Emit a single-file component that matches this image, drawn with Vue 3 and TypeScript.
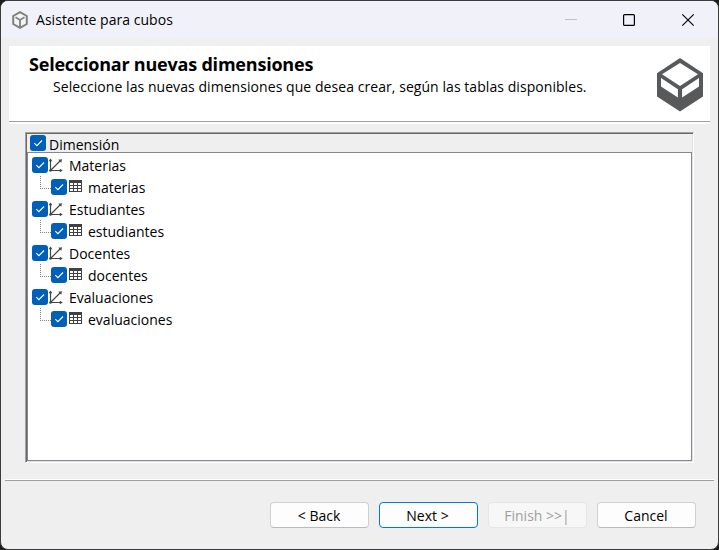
<script setup lang="ts">
interface Dimension {
  name: string
  table: string
}

interface WizardButton {
  label: string
  kind: 'normal' | 'primary' | 'disabled'
}

const dimensions: Dimension[] = [
  { name: 'Materias', table: 'materias' },
  { name: 'Estudiantes', table: 'estudiantes' },
  { name: 'Docentes', table: 'docentes' },
  { name: 'Evaluaciones', table: 'evaluaciones' },
]

const buttons: WizardButton[] = [
  { label: '< Back', kind: 'normal' },
  { label: 'Next >', kind: 'primary' },
  { label: 'Finish >>|', kind: 'disabled' },
  { label: 'Cancel', kind: 'normal' },
]
</script>

<template>
  <div class="desktop">
    <div class="window">
      <header class="titlebar">
        <svg class="app-icon" viewBox="0 0 16 18">
          <path d="M8 1.2 14.8 5v8L8 16.8 1.2 13V5Z" fill="#f4f4f6" stroke="#808080" stroke-width="2" />
          <path d="M3.5 6.2 8 9l4.5-2.8M8 9v7" fill="none" stroke="#858585" stroke-width="1.9" />
        </svg>
        <span class="caption">Asistente para cubos</span>
        <svg class="controls" viewBox="0 0 140 20">
          <path d="M5 9.5h12" stroke="#c0c0c5" />
          <rect x="63.600" y="4.600" width="10.800" height="10.800" rx="1" fill="none" stroke="#000" stroke-width="1.2" />
          <path d="M122.3 4.3l11.4 11.4M133.7 4.3l-11.4 11.4" stroke="#000" stroke-width="1.15" />
        </svg>
      </header>

      <section class="banner">
        <div class="banner-text">
          <h1>Seleccionar nuevas dimensiones</h1>
          <p>Seleccione las nuevas dimensiones que desea crear, según las tablas disponibles.</p>
        </div>
        <svg class="cube" viewBox="0 0 46 54">
          <path d="M23 0 46 15.3V38.5L23 53.6 0 38.5V15.3Z" fill="#58595b" />
          <path d="M23 5 41 16.3 23 28 5 16.3Z" fill="#fff" />
          <path d="M4 20 20.9 31.3v8.2L4 28.5ZM42 20 25.1 31.3v8.2L42 28.5Z" fill="#fff" />
        </svg>
      </section>

      <main class="tree">
        <div class="tree-head">
          <svg class="check" viewBox="0 0 16 16"><rect width="16" height="16" rx="3" fill="#005fb8" /><path d="M4.3 8.2 6.9 10.7 12 5.5" fill="none" stroke="#fff" stroke-width="1.1" /></svg>
          <span>Dimensión</span>
        </div>
        <div class="tree-body">
          <template v-for="d in dimensions" :key="d.name">
            <div class="row">
              <svg class="check" viewBox="0 0 16 16"><rect width="16" height="16" rx="3" fill="#005fb8" /><path d="M4.3 8.2 6.9 10.7 12 5.5" fill="none" stroke="#fff" stroke-width="1.1" /></svg>
              <svg class="axes" viewBox="0 0 15 15">
                <path d="M2.5 2v10.500H13M2.500 12.500 12 3" fill="none" stroke="#444" stroke-width="1.2" />
                <path d="M.6 3.300 2.500.5 4.400 3.300ZM11.800 10.800 14.800 12.500 11.800 14.200ZM10.300 1.800 14 1.200 13.300 4.800Z" fill="#444" />
                <circle cx="2.500" cy="12.500" r="1.300" fill="#444" />
              </svg>
              <span>{{ d.name }}</span>
            </div>
            <div class="row child">
              <svg class="branch" viewBox="0 0 11 22">
                <path d="M.5 0v12" stroke="#808080" stroke-dasharray="1 1" />
                <path d="M0 12.5h11" stroke="#808080" stroke-dasharray="1 1" />
              </svg>
              <svg class="check" viewBox="0 0 16 16"><rect width="16" height="16" rx="3" fill="#005fb8" /><path d="M4.3 8.2 6.9 10.7 12 5.5" fill="none" stroke="#fff" stroke-width="1.1" /></svg>
              <svg class="grid" viewBox="0 0 13 12">
                <path d="M0 0h13v12H0Z" fill="#414141" />
                <path d="M1 3h3v2H1ZM5 3h3v2H5ZM9 3h3v2H9ZM1 6h3v2H1ZM5 6h3v2H5ZM9 6h3v2H9ZM1 9h3v2H1ZM5 9h3v2H5ZM9 9h3v2H9Z" fill="#fff" />
              </svg>
              <span>{{ d.table }}</span>
            </div>
          </template>
        </div>
      </main>

      <div class="separator"></div>

      <footer class="buttons">
        <button v-for="b in buttons" :key="b.label" :class="b.kind" :disabled="b.kind === 'disabled'">{{ b.label }}</button>
      </footer>
    </div>
  </div>
</template>

<style>
body {
  margin: 0;
  background: #1c1c1c;
}
</style>

<style scoped>
* {
  box-sizing: border-box;
}
svg {
  display: block;
  flex: none;
}
.desktop {
  width: 719px;
  height: 550px;
  background: #1c1c1c;
  overflow: hidden;
  font-family: "Open Sans", "Noto Sans", sans-serif;
  font-size: 14px;
  color: #000;
}
.window {
  width: 719px;
  height: 550px;
  border: 1px solid #3b3b3d;
  border-radius: 8px;
  background: #efefef;
  overflow: hidden;
  display: flex;
  flex-direction: column;
}
.titlebar {
  height: 37px;
  flex: none;
  background: #f1f2f9;
  display: flex;
  align-items: center;
  padding-left: 11px;
}
.app-icon {
  width: 16px;
  height: 18px;
}
.caption {
  margin-left: 8px;
  line-height: 20px;
  letter-spacing: 0.04px;
  white-space: nowrap;
}
.controls {
  width: 140px;
  height: 20px;
  margin-left: auto;
  margin-right: 18px;
}
.banner {
  height: 78px;
  flex: none;
  margin: 8px 8px 0;
  background: #fff;
  border-bottom: 2px solid #fff;
  box-shadow: inset 0 -1px #a0a0a0;
  display: flex;
  justify-content: space-between;
}
.banner-text {
  padding: 6px 0 0 20px;
}
h1 {
  margin: 0;
  font-size: 18px;
  line-height: 24px;
  font-weight: 700;
  letter-spacing: -0.21px;
  white-space: nowrap;
}
p {
  margin: 1px 0 0 24px;
  line-height: 20px;
  letter-spacing: 0.06px;
  white-space: nowrap;
}
.cube {
  width: 46px;
  height: 54px;
  margin: 12px 7px 0 0;
}
.tree {
  width: 669px;
  height: 331px;
  flex: none;
  margin: 8px 0 0 24px;
  border: 1px solid;
  border-color: #a0a0a0 #fff #fff #a0a0a0;
  box-shadow: inset 1px 1px #696969, inset -1px -1px #e3e3e3;
  padding: 1px;
  background: #efefef;
  display: flex;
  flex-direction: column;
}
.tree-head {
  height: 18px;
  flex: none;
  padding: 1px 0 0 3px;
  display: flex;
  align-items: flex-start;
}
.tree-head span {
  margin-left: 3px;
  line-height: 20px;
}
.check {
  width: 16px;
  height: 16px;
}
.tree-body {
  flex: 1;
  border: 1px solid #828790;
  background: #fff;
  padding-top: 1px;
}
.row {
  height: 22px;
  display: flex;
  align-items: center;
  padding-left: 4px;
}
.row span {
  line-height: 20px;
  padding-top: 2px;
}
.axes {
  width: 15px;
  height: 15px;
  margin-right: 6px;
}
.child {
  padding-left: 12px;
}
.branch {
  width: 11px;
  height: 22px;
}
.grid {
  width: 13px;
  height: 12px;
  margin: 0 6px 2px 2px;
}
.separator {
  height: 2px;
  flex: none;
  margin: 16px 4px 0;
  background: linear-gradient(#fff 50%, #a0a0a0 50%);
}
.buttons {
  display: flex;
  justify-content: flex-end;
  gap: 10px;
  padding: 21px 22px 0 0;
}
button {
  width: 99px;
  height: 26px;
  padding: 2px 1px 0 0;
  font: inherit;
  line-height: 20px;
  color: #000;
  background: #fdfdfd;
  border: 1px solid #d0d0d0;
  border-bottom-color: #bababa;
  border-radius: 4px;
}
button.primary {
  padding-right: 2px;
  border-color: #0078d4;
}
button.disabled {
  color: #a0a0a0;
  background: #f7f7f7;
  border-color: #e6e6e6;
}
</style>
